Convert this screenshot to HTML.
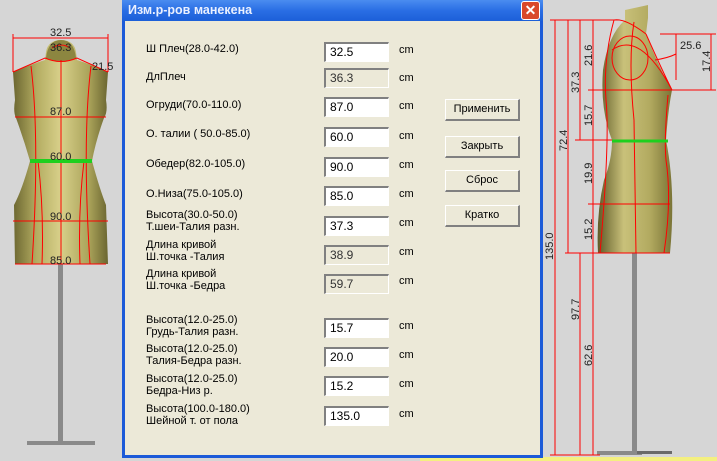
<!DOCTYPE html>
<html><head><meta charset="utf-8"><style>
body{margin:0;width:717px;height:461px;background:#d6d6d6;position:relative;overflow:hidden;font-family:"Liberation Sans",sans-serif;}
svg{position:absolute;left:0;top:0}
#dlg{position:absolute;left:122px;top:0;width:421px;height:458px;background:#1c5ad8;}
#title{position:absolute;left:0;top:0;width:421px;height:21px;background:linear-gradient(#4a8cf0,#2a6ee4 50%,#1c5fd8);color:#eaf0ff;font-weight:bold;font-size:12.5px;line-height:20px;text-indent:6px;}
#x{position:absolute;right:3px;top:1px;width:19px;height:19px;background:#d9482a;border:1px solid #fff;border-radius:3px;box-sizing:border-box;color:#fff;font-size:14px;line-height:16px;text-align:center;font-weight:bold}
#body{position:absolute;left:3px;top:21px;width:415px;height:434px;background:#ece9d8;}
.l{position:absolute;left:146px;font-size:11px;color:#000;line-height:12px;white-space:nowrap}
.i{position:absolute;left:324px;width:65px;height:20px;box-sizing:border-box;border-top:2px solid #808080;border-left:2px solid #808080;border-right:1px solid #fff;border-bottom:1px solid #fff;background:#fff;font-size:12px;line-height:17px;padding-left:4px;}
.ro{background:#ece9d8;color:#333}
.c{position:absolute;left:399px;font-size:11px}
.b{position:absolute;left:445px;width:75px;height:22px;box-sizing:border-box;border:1px solid #fff;border-right:2px solid #808080;border-bottom:2px solid #808080;background:#ece9d8;font-size:11px;text-align:center;line-height:19px}
</style></head><body>
<svg width="717" height="461">
<defs>
<linearGradient id="g" x1="0" x2="1"><stop offset="0" stop-color="#6b6630"/><stop offset=".25" stop-color="#b4ad62"/><stop offset=".5" stop-color="#d8d08a"/><stop offset=".8" stop-color="#aaa35a"/><stop offset="1" stop-color="#6b6630"/></linearGradient>
<linearGradient id="g2" x1="0" x2="1"><stop offset="0" stop-color="#5e5a28"/><stop offset=".35" stop-color="#c9c17a"/><stop offset=".7" stop-color="#b2aa60"/><stop offset="1" stop-color="#7a7436"/></linearGradient>
</defs>
<rect x="58" y="264" width="5" height="178" fill="#8a8a8a"/><rect x="27" y="441" width="68" height="4" fill="#8a8a8a"/>
<path d="M46 52 Q48 40 61 40 Q74 40 76 52 L77 60 Q90 64 108 72 L106 100 Q108 112 104 118 Q96 140 92 161 Q100 190 106 205 L108 264 L15 264 L14 205 Q22 190 30 161 Q24 140 16 118 Q13 112 15 100 L13 72 Q32 64 45 60 Z" fill="url(#g)"/>
<path d="M46 58 Q48 40 61 40 Q74 40 76 58 Q61 64 46 58 Z" fill="#8c8640"/>
<g stroke="#f00" stroke-width="1" fill="none">
<path d="M13 38 H108 M13 34 V72 M108 34 V72"/><path d="M13 72 L45 58 Q61 65 77 58 L108 72"/>
<path d="M15 117 H106 M13 221 H108 M15 264 H106"/>
<path d="M61 60 V264 M31 66 Q40 140 32 264 M91 66 Q82 140 90 264 M38 161 Q44 210 42 264 M84 161 Q78 210 80 264"/>
<path d="M52 48 Q61 42 70 48"/>
</g>
<line x1="30" y1="161" x2="92" y2="161" stroke="#1ed01e" stroke-width="4"/>
<g font-size="11" fill="#222" font-family="Liberation Sans"><text x="50" y="36">32.5</text><text x="50" y="51">36.3</text><text x="92" y="70">21.5</text><text x="50" y="115">87.0</text><text x="50" y="160">60.0</text><text x="50" y="220">90.0</text><text x="50" y="264">85.0</text></g>
<rect x="632" y="253" width="5" height="200" fill="#8a8a8a"/><rect x="597" y="451" width="45" height="4" fill="#8a8a8a"/><rect x="637" y="451" width="35" height="3" fill="#6a6a6a"/>
<path d="M625 10 L648 5 L648 18 L646 34 Q660 70 672 90 Q668 110 666 140 Q676 190 670 253 L598 253 Q596 215 604 180 Q612 160 612 140 Q600 110 603 70 Q608 35 625 20 Z" fill="url(#g2)"/>
<g stroke="#f00" stroke-width="1" fill="none">
<path d="M614 20 Q625 18 646 34 M603 90 H672 M612 140 H668 M600 204 H670 M598 253 H670"/>
<ellipse cx="630" cy="58" rx="18" ry="22"/><path d="M614 20 Q603 60 606 100 Q610 140 600 253 M634 22 Q628 60 634 120 L636 253 M668 95 Q664 140 666 160 Q672 200 664 253 M646 34 Q662 70 672 90 Q640 30 612 50"/>
<path d="M555 20 V455 M568 20 V253 M580 20 V140 M593 20 V455 M580 253 V455 M550 20 H620 M550 455 H600 M565 253 H600 M575 140 H612 M588 90 H603 M588 204 H600"/>
<path d="M660 34 H716 M660 90 H716 M711 34 V90 M676 34 V80 M655 60 Q668 58 676 54"/>
</g>
<line x1="612" y1="141" x2="668" y2="141" stroke="#1ed01e" stroke-width="3"/>
<g font-size="11" fill="#222" font-family="Liberation Sans">
<text x="680" y="49">25.6</text>
<text transform="translate(553,260) rotate(-90)">135.0</text>
<text transform="translate(567,151) rotate(-90)">72.4</text>
<text transform="translate(579,93) rotate(-90)">37.3</text>
<text transform="translate(592,66) rotate(-90)">21.6</text>
<text transform="translate(592,126) rotate(-90)">15.7</text>
<text transform="translate(592,184) rotate(-90)">19.9</text>
<text transform="translate(592,240) rotate(-90)">15.2</text>
<text transform="translate(579,320) rotate(-90)">97.7</text>
<text transform="translate(592,366) rotate(-90)">62.6</text>
<text transform="translate(710,72) rotate(-90)">17.4</text>
</g>
<rect x="420" y="457" width="297" height="4" fill="#f4f080"/>
</svg>
<div id="dlg"><div id="title">Изм.р-ров манекена</div><div id="x">✕</div><div id="body"></div></div>
<div class="l" style="top:43px">Ш Плеч(28.0-42.0)</div>
<div class="l" style="top:71px">ДлПлеч</div>
<div class="l" style="top:99px">Огруди(70.0-110.0)</div>
<div class="l" style="top:128px">О. талии ( 50.0-85.0)</div>
<div class="l" style="top:158px">Обедер(82.0-105.0)</div>
<div class="l" style="top:188px">О.Низа(75.0-105.0)</div>
<div class="l" style="top:209px">Высота(30.0-50.0)<br>Т.шеи-Талия разн.</div>
<div class="l" style="top:239px">Длина кривой<br>Ш.точка -Талия</div>
<div class="l" style="top:268px">Длина кривой<br>Ш.точка -Бедра</div>
<div class="l" style="top:314px">Высота(12.0-25.0)<br>Грудь-Талия разн.</div>
<div class="l" style="top:343px">Высота(12.0-25.0)<br>Талия-Бедра разн.</div>
<div class="l" style="top:373px">Высота(12.0-25.0)<br>Бедра-Низ р.</div>
<div class="l" style="top:403px">Высота(100.0-180.0)<br>Шейной т. от пола</div>
<div class="i" style="top:42px">32.5</div>
<div class="i ro" style="top:68px">36.3</div>
<div class="i" style="top:97px">87.0</div>
<div class="i" style="top:127px">60.0</div>
<div class="i" style="top:157px">90.0</div>
<div class="i" style="top:186px">85.0</div>
<div class="i" style="top:216px">37.3</div>
<div class="i ro" style="top:245px">38.9</div>
<div class="i ro" style="top:274px">59.7</div>
<div class="i" style="top:318px">15.7</div>
<div class="i" style="top:347px">20.0</div>
<div class="i" style="top:376px">15.2</div>
<div class="i" style="top:406px">135.0</div>
<div class="c" style="top:44px">cm</div><div class="c" style="top:72px">cm</div><div class="c" style="top:100px">cm</div><div class="c" style="top:130px">cm</div><div class="c" style="top:159px">cm</div><div class="c" style="top:188px">cm</div><div class="c" style="top:217px">cm</div><div class="c" style="top:246px">cm</div><div class="c" style="top:275px">cm</div><div class="c" style="top:320px">cm</div><div class="c" style="top:349px">cm</div><div class="c" style="top:378px">cm</div><div class="c" style="top:408px">cm</div>
<div class="b" style="top:99px">Применить</div>
<div class="b" style="top:136px">Закрыть</div>
<div class="b" style="top:170px">Сброс</div>
<div class="b" style="top:205px">Кратко</div>
</body></html>
